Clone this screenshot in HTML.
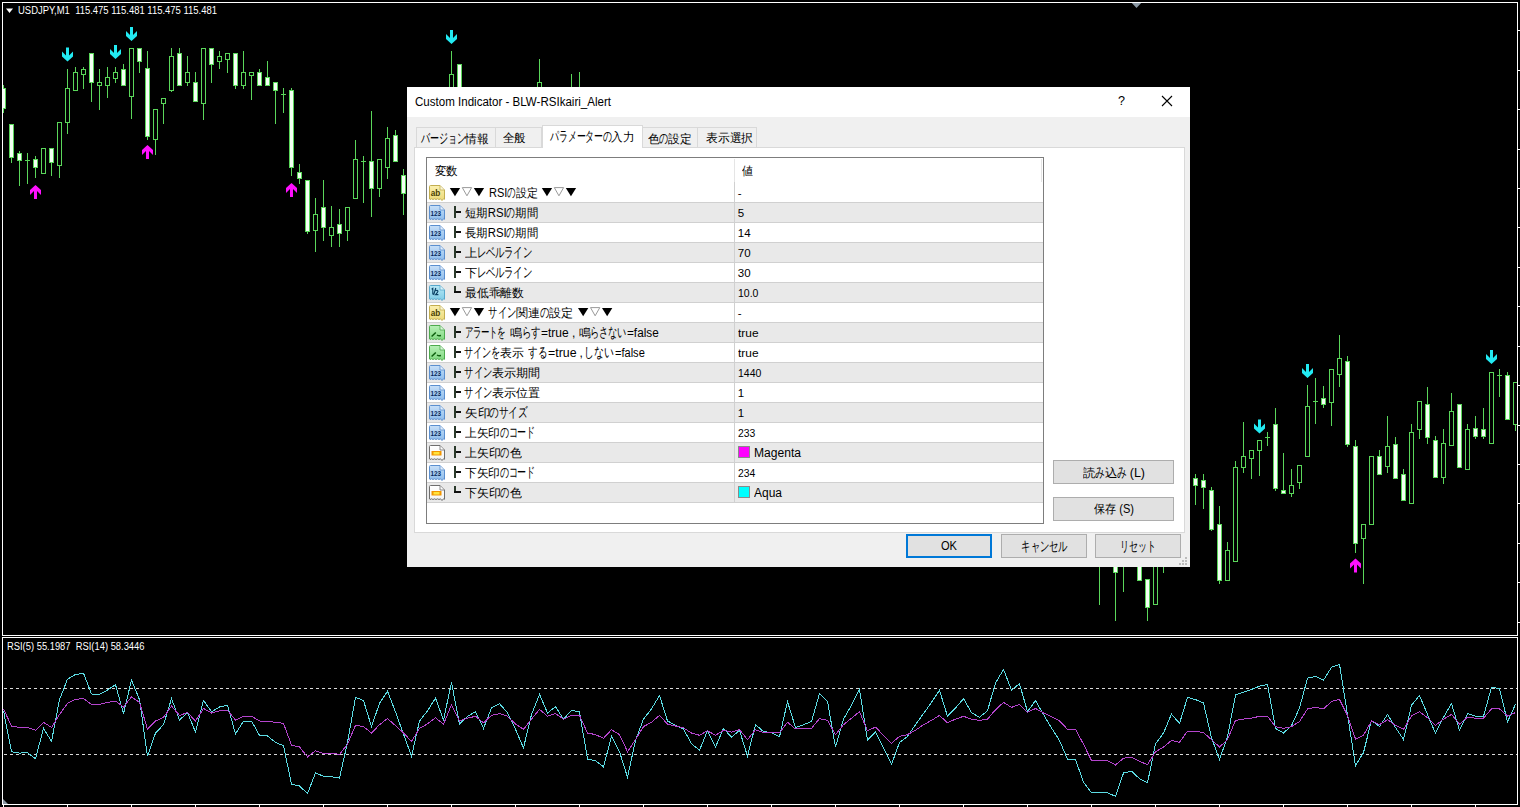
<!DOCTYPE html>
<html lang="ja"><head><meta charset="utf-8"><style>
html,body{margin:0;padding:0;background:#000;width:1520px;height:807px;overflow:hidden;position:relative}
body{font-family:"Liberation Sans",sans-serif}
.t{position:absolute;white-space:nowrap;line-height:1;display:inline-block;transform-origin:0 0}
.k{display:inline-block;width:0.74em}
.k>span{display:inline-block;font-size:1.18em;transform:scaleX(0.66);margin-left:-0.186em;width:1em;text-align:center}
</style></head><body>
<svg style="position:absolute;left:0;top:0" width="1520" height="807">
<defs><clipPath id="cc"><rect x="3" y="3" width="1514" height="632"/></clipPath><clipPath id="rc"><rect x="3" y="638" width="1514" height="166"/></clipPath></defs>
<g shape-rendering="crispEdges">
<rect x="2.5" y="2.5" width="1515" height="633" fill="none" stroke="#fff" stroke-width="1"/>
<rect x="2.5" y="637.5" width="1515" height="167" fill="none" stroke="#fff" stroke-width="1"/>
<line x1="1518" y1="30.5" x2="1520" y2="30.5" stroke="#fff"/>
<line x1="1518" y1="70.5" x2="1520" y2="70.5" stroke="#fff"/>
<line x1="1518" y1="109.5" x2="1520" y2="109.5" stroke="#fff"/>
<line x1="1518" y1="149.5" x2="1520" y2="149.5" stroke="#fff"/>
<line x1="1518" y1="188.5" x2="1520" y2="188.5" stroke="#fff"/>
<line x1="1518" y1="227.5" x2="1520" y2="227.5" stroke="#fff"/>
<line x1="1518" y1="267.5" x2="1520" y2="267.5" stroke="#fff"/>
<line x1="1518" y1="306.5" x2="1520" y2="306.5" stroke="#fff"/>
<line x1="1518" y1="346.5" x2="1520" y2="346.5" stroke="#fff"/>
<line x1="1518" y1="385.5" x2="1520" y2="385.5" stroke="#fff"/>
<line x1="1518" y1="425.5" x2="1520" y2="425.5" stroke="#fff"/>
<line x1="1518" y1="464.5" x2="1520" y2="464.5" stroke="#fff"/>
<line x1="1518" y1="503.5" x2="1520" y2="503.5" stroke="#fff"/>
<line x1="1518" y1="543.5" x2="1520" y2="543.5" stroke="#fff"/>
<line x1="1518" y1="582.5" x2="1520" y2="582.5" stroke="#fff"/>
<line x1="1518" y1="622.5" x2="1520" y2="622.5" stroke="#fff"/>
<line x1="4" y1="688.5" x2="1517" y2="688.5" stroke="#d8d8d8" stroke-dasharray="3,3"/>
<line x1="4" y1="754.5" x2="1517" y2="754.5" stroke="#d8d8d8" stroke-dasharray="3,3"/>
<line x1="3.5" y1="805" x2="3.5" y2="807" stroke="#fff"/>
<line x1="67.5" y1="805" x2="67.5" y2="807" stroke="#fff"/>
<line x1="131.5" y1="805" x2="131.5" y2="807" stroke="#fff"/>
<line x1="195.5" y1="805" x2="195.5" y2="807" stroke="#fff"/>
<line x1="259.5" y1="805" x2="259.5" y2="807" stroke="#fff"/>
<line x1="323.5" y1="805" x2="323.5" y2="807" stroke="#fff"/>
<line x1="387.5" y1="805" x2="387.5" y2="807" stroke="#fff"/>
<line x1="451.5" y1="805" x2="451.5" y2="807" stroke="#fff"/>
<line x1="515.5" y1="805" x2="515.5" y2="807" stroke="#fff"/>
<line x1="579.5" y1="805" x2="579.5" y2="807" stroke="#fff"/>
<line x1="643.5" y1="805" x2="643.5" y2="807" stroke="#fff"/>
<line x1="707.5" y1="805" x2="707.5" y2="807" stroke="#fff"/>
<line x1="771.5" y1="805" x2="771.5" y2="807" stroke="#fff"/>
<line x1="835.5" y1="805" x2="835.5" y2="807" stroke="#fff"/>
<line x1="899.5" y1="805" x2="899.5" y2="807" stroke="#fff"/>
<line x1="963.5" y1="805" x2="963.5" y2="807" stroke="#fff"/>
<line x1="1027.5" y1="805" x2="1027.5" y2="807" stroke="#fff"/>
<line x1="1091.5" y1="805" x2="1091.5" y2="807" stroke="#fff"/>
<line x1="1155.5" y1="805" x2="1155.5" y2="807" stroke="#fff"/>
<line x1="1219.5" y1="805" x2="1219.5" y2="807" stroke="#fff"/>
<line x1="1283.5" y1="805" x2="1283.5" y2="807" stroke="#fff"/>
<line x1="1347.5" y1="805" x2="1347.5" y2="807" stroke="#fff"/>
<line x1="1411.5" y1="805" x2="1411.5" y2="807" stroke="#fff"/>
<line x1="1475.5" y1="805" x2="1475.5" y2="807" stroke="#fff"/>
<g clip-path="url(#cc)">
<rect x="3" y="85" width="1" height="3" fill="#5ad65a"/>
<rect x="3" y="108" width="1" height="5" fill="#5ad65a"/>
<rect x="1" y="88" width="5" height="21" fill="#5ad65a"/>
<rect x="2" y="89" width="3" height="19" fill="#f4fff4"/>
<rect x="11" y="157" width="1" height="6" fill="#5ad65a"/>
<rect x="9" y="124" width="5" height="34" fill="#5ad65a"/>
<rect x="10" y="125" width="3" height="32" fill="#f4fff4"/>
<rect x="19" y="151" width="1" height="2" fill="#5ad65a"/>
<rect x="19" y="160" width="1" height="26" fill="#5ad65a"/>
<rect x="17" y="153" width="5" height="8" fill="#5ad65a"/>
<rect x="18" y="154" width="3" height="6" fill="#f4fff4"/>
<rect x="27" y="153" width="1" height="7" fill="#5ad65a"/>
<rect x="27" y="160" width="1" height="24" fill="#5ad65a"/>
<rect x="25" y="160" width="5" height="1" fill="#5ad65a"/>
<rect x="35" y="156" width="1" height="3" fill="#5ad65a"/>
<rect x="35" y="167" width="1" height="11" fill="#5ad65a"/>
<rect x="33" y="159" width="5" height="9" fill="#5ad65a"/>
<rect x="34" y="160" width="3" height="7" fill="#f4fff4"/>
<rect x="41.5" y="148.5" width="4" height="25" fill="none" stroke="#5ad65a"/>
<rect x="51" y="162" width="1" height="14" fill="#5ad65a"/>
<rect x="49" y="148" width="5" height="15" fill="#5ad65a"/>
<rect x="50" y="149" width="3" height="13" fill="#f4fff4"/>
<rect x="59" y="165" width="1" height="13" fill="#5ad65a"/>
<rect x="57.5" y="122.5" width="4" height="43" fill="none" stroke="#5ad65a"/>
<rect x="67" y="69" width="1" height="19" fill="#5ad65a"/>
<rect x="67" y="122" width="1" height="12" fill="#5ad65a"/>
<rect x="65.5" y="88.5" width="4" height="34" fill="none" stroke="#5ad65a"/>
<rect x="75" y="67" width="1" height="5" fill="#5ad65a"/>
<rect x="73.5" y="72.5" width="4" height="18" fill="none" stroke="#5ad65a"/>
<rect x="83" y="67" width="1" height="2" fill="#5ad65a"/>
<rect x="83" y="74" width="1" height="15" fill="#5ad65a"/>
<rect x="81.5" y="69.5" width="4" height="5" fill="none" stroke="#5ad65a"/>
<rect x="91" y="82" width="1" height="20" fill="#5ad65a"/>
<rect x="89" y="53" width="5" height="30" fill="#5ad65a"/>
<rect x="90" y="54" width="3" height="28" fill="#f4fff4"/>
<rect x="99" y="69" width="1" height="13" fill="#5ad65a"/>
<rect x="99" y="85" width="1" height="25" fill="#5ad65a"/>
<rect x="97.5" y="82.5" width="4" height="3" fill="none" stroke="#5ad65a"/>
<rect x="107" y="67" width="1" height="10" fill="#5ad65a"/>
<rect x="107" y="85" width="1" height="13" fill="#5ad65a"/>
<rect x="105.5" y="77.5" width="4" height="8" fill="none" stroke="#5ad65a"/>
<rect x="115" y="67" width="1" height="5" fill="#5ad65a"/>
<rect x="115" y="78" width="1" height="5" fill="#5ad65a"/>
<rect x="113.5" y="72.5" width="4" height="6" fill="none" stroke="#5ad65a"/>
<rect x="123" y="64" width="1" height="5" fill="#5ad65a"/>
<rect x="121" y="69" width="5" height="17" fill="#5ad65a"/>
<rect x="122" y="70" width="3" height="15" fill="#f4fff4"/>
<rect x="131" y="96" width="1" height="23" fill="#5ad65a"/>
<rect x="129.5" y="48.5" width="4" height="48" fill="none" stroke="#5ad65a"/>
<rect x="139" y="61" width="1" height="12" fill="#5ad65a"/>
<rect x="137" y="48" width="5" height="14" fill="#5ad65a"/>
<rect x="138" y="49" width="3" height="12" fill="#f4fff4"/>
<rect x="147" y="51" width="1" height="17" fill="#5ad65a"/>
<rect x="147" y="136" width="1" height="4" fill="#5ad65a"/>
<rect x="145" y="68" width="5" height="69" fill="#5ad65a"/>
<rect x="146" y="69" width="3" height="67" fill="#f4fff4"/>
<rect x="155" y="139" width="1" height="16" fill="#5ad65a"/>
<rect x="153.5" y="109.5" width="4" height="30" fill="none" stroke="#5ad65a"/>
<rect x="163" y="103" width="1" height="21" fill="#5ad65a"/>
<rect x="161.5" y="98.5" width="4" height="5" fill="none" stroke="#5ad65a"/>
<rect x="171" y="48" width="1" height="8" fill="#5ad65a"/>
<rect x="171" y="90" width="1" height="2" fill="#5ad65a"/>
<rect x="169.5" y="56.5" width="4" height="34" fill="none" stroke="#5ad65a"/>
<rect x="179" y="48" width="1" height="5" fill="#5ad65a"/>
<rect x="177" y="53" width="5" height="33" fill="#5ad65a"/>
<rect x="178" y="54" width="3" height="31" fill="#f4fff4"/>
<rect x="187" y="56" width="1" height="16" fill="#5ad65a"/>
<rect x="187" y="82" width="1" height="4" fill="#5ad65a"/>
<rect x="185.5" y="72.5" width="4" height="10" fill="none" stroke="#5ad65a"/>
<rect x="195" y="72" width="1" height="10" fill="#5ad65a"/>
<rect x="193" y="82" width="5" height="20" fill="#5ad65a"/>
<rect x="194" y="83" width="3" height="18" fill="#f4fff4"/>
<rect x="203" y="103" width="1" height="17" fill="#5ad65a"/>
<rect x="201.5" y="48.5" width="4" height="55" fill="none" stroke="#5ad65a"/>
<rect x="211" y="64" width="1" height="19" fill="#5ad65a"/>
<rect x="209" y="48" width="5" height="17" fill="#5ad65a"/>
<rect x="210" y="49" width="3" height="15" fill="#f4fff4"/>
<rect x="219" y="51" width="1" height="5" fill="#5ad65a"/>
<rect x="219" y="61" width="1" height="8" fill="#5ad65a"/>
<rect x="217.5" y="56.5" width="4" height="5" fill="none" stroke="#5ad65a"/>
<rect x="227" y="59" width="1" height="14" fill="#5ad65a"/>
<rect x="225.5" y="53.5" width="4" height="6" fill="none" stroke="#5ad65a"/>
<rect x="235" y="85" width="1" height="4" fill="#5ad65a"/>
<rect x="233" y="53" width="5" height="33" fill="#5ad65a"/>
<rect x="234" y="54" width="3" height="31" fill="#f4fff4"/>
<rect x="243" y="51" width="1" height="21" fill="#5ad65a"/>
<rect x="243" y="85" width="1" height="4" fill="#5ad65a"/>
<rect x="241.5" y="72.5" width="4" height="13" fill="none" stroke="#5ad65a"/>
<rect x="251" y="75" width="1" height="25" fill="#5ad65a"/>
<rect x="249.5" y="72.5" width="4" height="3" fill="none" stroke="#5ad65a"/>
<rect x="259" y="69" width="1" height="3" fill="#5ad65a"/>
<rect x="257" y="72" width="5" height="14" fill="#5ad65a"/>
<rect x="258" y="73" width="3" height="12" fill="#f4fff4"/>
<rect x="267" y="61" width="1" height="16" fill="#5ad65a"/>
<rect x="265" y="77" width="5" height="9" fill="#5ad65a"/>
<rect x="266" y="78" width="3" height="7" fill="#f4fff4"/>
<rect x="275" y="90" width="1" height="34" fill="#5ad65a"/>
<rect x="273" y="82" width="5" height="9" fill="#5ad65a"/>
<rect x="274" y="83" width="3" height="7" fill="#f4fff4"/>
<rect x="283" y="88" width="1" height="6" fill="#5ad65a"/>
<rect x="283" y="94" width="1" height="19" fill="#5ad65a"/>
<rect x="281" y="94" width="5" height="1" fill="#5ad65a"/>
<rect x="291" y="88" width="1" height="2" fill="#5ad65a"/>
<rect x="291" y="167" width="1" height="9" fill="#5ad65a"/>
<rect x="289" y="90" width="5" height="78" fill="#5ad65a"/>
<rect x="290" y="91" width="3" height="76" fill="#f4fff4"/>
<rect x="299" y="164" width="1" height="8" fill="#5ad65a"/>
<rect x="299" y="178" width="1" height="6" fill="#5ad65a"/>
<rect x="297" y="172" width="5" height="7" fill="#5ad65a"/>
<rect x="298" y="173" width="3" height="5" fill="#f4fff4"/>
<rect x="307" y="231" width="1" height="3" fill="#5ad65a"/>
<rect x="305" y="180" width="5" height="52" fill="#5ad65a"/>
<rect x="306" y="181" width="3" height="50" fill="#f4fff4"/>
<rect x="315" y="198" width="1" height="16" fill="#5ad65a"/>
<rect x="315" y="230" width="1" height="22" fill="#5ad65a"/>
<rect x="313.5" y="214.5" width="4" height="16" fill="none" stroke="#5ad65a"/>
<rect x="323" y="180" width="1" height="27" fill="#5ad65a"/>
<rect x="323" y="227" width="1" height="14" fill="#5ad65a"/>
<rect x="321" y="207" width="5" height="21" fill="#5ad65a"/>
<rect x="322" y="208" width="3" height="19" fill="#f4fff4"/>
<rect x="331" y="206" width="1" height="21" fill="#5ad65a"/>
<rect x="331" y="235" width="1" height="12" fill="#5ad65a"/>
<rect x="329.5" y="227.5" width="4" height="8" fill="none" stroke="#5ad65a"/>
<rect x="339" y="209" width="1" height="15" fill="#5ad65a"/>
<rect x="339" y="233" width="1" height="14" fill="#5ad65a"/>
<rect x="337" y="224" width="5" height="10" fill="#5ad65a"/>
<rect x="338" y="225" width="3" height="8" fill="#f4fff4"/>
<rect x="347" y="230" width="1" height="11" fill="#5ad65a"/>
<rect x="345.5" y="207.5" width="4" height="23" fill="none" stroke="#5ad65a"/>
<rect x="355" y="140" width="1" height="19" fill="#5ad65a"/>
<rect x="353.5" y="159.5" width="4" height="39" fill="none" stroke="#5ad65a"/>
<rect x="363" y="156" width="1" height="5" fill="#5ad65a"/>
<rect x="363" y="161" width="1" height="42" fill="#5ad65a"/>
<rect x="361" y="161" width="5" height="1" fill="#5ad65a"/>
<rect x="371" y="111" width="1" height="50" fill="#5ad65a"/>
<rect x="371" y="188" width="1" height="29" fill="#5ad65a"/>
<rect x="369" y="161" width="5" height="28" fill="#5ad65a"/>
<rect x="370" y="162" width="3" height="26" fill="#f4fff4"/>
<rect x="379" y="188" width="1" height="9" fill="#5ad65a"/>
<rect x="377.5" y="159.5" width="4" height="29" fill="none" stroke="#5ad65a"/>
<rect x="387" y="127" width="1" height="11" fill="#5ad65a"/>
<rect x="387" y="167" width="1" height="12" fill="#5ad65a"/>
<rect x="385.5" y="138.5" width="4" height="29" fill="none" stroke="#5ad65a"/>
<rect x="395" y="130" width="1" height="5" fill="#5ad65a"/>
<rect x="393" y="135" width="5" height="27" fill="#5ad65a"/>
<rect x="394" y="136" width="3" height="25" fill="#f4fff4"/>
<rect x="403" y="169" width="1" height="6" fill="#5ad65a"/>
<rect x="403" y="193" width="1" height="22" fill="#5ad65a"/>
<rect x="401" y="175" width="5" height="19" fill="#5ad65a"/>
<rect x="402" y="176" width="3" height="17" fill="#f4fff4"/>
<rect x="451" y="51" width="1" height="23" fill="#5ad65a"/>
<rect x="449.5" y="74.5" width="4" height="46" fill="none" stroke="#5ad65a"/>
<rect x="457" y="64" width="5" height="57" fill="#5ad65a"/>
<rect x="458" y="65" width="3" height="55" fill="#f4fff4"/>
<rect x="539" y="59" width="1" height="23" fill="#5ad65a"/>
<rect x="537.5" y="82.5" width="4" height="38" fill="none" stroke="#5ad65a"/>
<rect x="571" y="74" width="1" height="26" fill="#5ad65a"/>
<rect x="569.5" y="100.5" width="4" height="20" fill="none" stroke="#5ad65a"/>
<rect x="579" y="72" width="1" height="28" fill="#5ad65a"/>
<rect x="577.5" y="100.5" width="4" height="20" fill="none" stroke="#5ad65a"/>
<rect x="1099" y="540" width="1" height="0" fill="#5ad65a"/>
<rect x="1099" y="560" width="1" height="45" fill="#5ad65a"/>
<rect x="1097.5" y="540.5" width="4" height="20" fill="none" stroke="#5ad65a"/>
<rect x="1115" y="572" width="1" height="49" fill="#5ad65a"/>
<rect x="1113" y="540" width="5" height="33" fill="#5ad65a"/>
<rect x="1114" y="541" width="3" height="31" fill="#f4fff4"/>
<rect x="1123" y="540" width="1" height="0" fill="#5ad65a"/>
<rect x="1123" y="560" width="1" height="32" fill="#5ad65a"/>
<rect x="1121.5" y="540.5" width="4" height="20" fill="none" stroke="#5ad65a"/>
<rect x="1137" y="540" width="5" height="41" fill="#5ad65a"/>
<rect x="1138" y="541" width="3" height="39" fill="#f4fff4"/>
<rect x="1147" y="607" width="1" height="14" fill="#5ad65a"/>
<rect x="1145" y="579" width="5" height="29" fill="#5ad65a"/>
<rect x="1146" y="580" width="3" height="27" fill="#f4fff4"/>
<rect x="1153.5" y="540.5" width="4" height="64" fill="none" stroke="#5ad65a"/>
<rect x="1163" y="540" width="1" height="0" fill="#5ad65a"/>
<rect x="1163" y="560" width="1" height="13" fill="#5ad65a"/>
<rect x="1161.5" y="540.5" width="4" height="20" fill="none" stroke="#5ad65a"/>
<rect x="1195" y="474" width="1" height="4" fill="#5ad65a"/>
<rect x="1195" y="485" width="1" height="20" fill="#5ad65a"/>
<rect x="1193" y="478" width="5" height="8" fill="#5ad65a"/>
<rect x="1194" y="479" width="3" height="6" fill="#f4fff4"/>
<rect x="1203" y="474" width="1" height="6" fill="#5ad65a"/>
<rect x="1203" y="487" width="1" height="22" fill="#5ad65a"/>
<rect x="1201" y="480" width="5" height="8" fill="#5ad65a"/>
<rect x="1202" y="481" width="3" height="6" fill="#f4fff4"/>
<rect x="1211" y="487" width="1" height="3" fill="#5ad65a"/>
<rect x="1211" y="529" width="1" height="2" fill="#5ad65a"/>
<rect x="1209" y="490" width="5" height="40" fill="#5ad65a"/>
<rect x="1210" y="491" width="3" height="38" fill="#f4fff4"/>
<rect x="1219" y="506" width="1" height="18" fill="#5ad65a"/>
<rect x="1219" y="580" width="1" height="4" fill="#5ad65a"/>
<rect x="1217" y="524" width="5" height="57" fill="#5ad65a"/>
<rect x="1218" y="525" width="3" height="55" fill="#f4fff4"/>
<rect x="1227" y="542" width="1" height="8" fill="#5ad65a"/>
<rect x="1225.5" y="550.5" width="4" height="30" fill="none" stroke="#5ad65a"/>
<rect x="1235" y="461" width="1" height="6" fill="#5ad65a"/>
<rect x="1233.5" y="467.5" width="4" height="94" fill="none" stroke="#5ad65a"/>
<rect x="1243" y="422" width="1" height="34" fill="#5ad65a"/>
<rect x="1243" y="467" width="1" height="6" fill="#5ad65a"/>
<rect x="1241.5" y="456.5" width="4" height="11" fill="none" stroke="#5ad65a"/>
<rect x="1251" y="458" width="1" height="21" fill="#5ad65a"/>
<rect x="1249.5" y="450.5" width="4" height="8" fill="none" stroke="#5ad65a"/>
<rect x="1259" y="450" width="1" height="26" fill="#5ad65a"/>
<rect x="1257.5" y="440.5" width="4" height="10" fill="none" stroke="#5ad65a"/>
<rect x="1267" y="432" width="1" height="5" fill="#5ad65a"/>
<rect x="1267" y="437" width="1" height="9" fill="#5ad65a"/>
<rect x="1265" y="437" width="5" height="1" fill="#5ad65a"/>
<rect x="1275" y="408" width="1" height="16" fill="#5ad65a"/>
<rect x="1275" y="488" width="1" height="3" fill="#5ad65a"/>
<rect x="1273" y="424" width="5" height="65" fill="#5ad65a"/>
<rect x="1274" y="425" width="3" height="63" fill="#f4fff4"/>
<rect x="1283" y="453" width="1" height="37" fill="#5ad65a"/>
<rect x="1281" y="490" width="5" height="4" fill="#5ad65a"/>
<rect x="1282" y="491" width="3" height="2" fill="#f4fff4"/>
<rect x="1291" y="469" width="1" height="16" fill="#5ad65a"/>
<rect x="1291" y="493" width="1" height="4" fill="#5ad65a"/>
<rect x="1289.5" y="485.5" width="4" height="8" fill="none" stroke="#5ad65a"/>
<rect x="1299" y="482" width="1" height="7" fill="#5ad65a"/>
<rect x="1297.5" y="465.5" width="4" height="17" fill="none" stroke="#5ad65a"/>
<rect x="1307" y="385" width="1" height="21" fill="#5ad65a"/>
<rect x="1305.5" y="406.5" width="4" height="50" fill="none" stroke="#5ad65a"/>
<rect x="1315" y="378" width="1" height="23" fill="#5ad65a"/>
<rect x="1315" y="401" width="1" height="23" fill="#5ad65a"/>
<rect x="1313" y="401" width="5" height="1" fill="#5ad65a"/>
<rect x="1323" y="386" width="1" height="12" fill="#5ad65a"/>
<rect x="1323" y="404" width="1" height="4" fill="#5ad65a"/>
<rect x="1321" y="398" width="5" height="7" fill="#5ad65a"/>
<rect x="1322" y="399" width="3" height="5" fill="#f4fff4"/>
<rect x="1331" y="402" width="1" height="24" fill="#5ad65a"/>
<rect x="1329.5" y="369.5" width="4" height="33" fill="none" stroke="#5ad65a"/>
<rect x="1339" y="335" width="1" height="23" fill="#5ad65a"/>
<rect x="1339" y="374" width="1" height="13" fill="#5ad65a"/>
<rect x="1337.5" y="358.5" width="4" height="16" fill="none" stroke="#5ad65a"/>
<rect x="1347" y="356" width="1" height="5" fill="#5ad65a"/>
<rect x="1347" y="444" width="1" height="3" fill="#5ad65a"/>
<rect x="1345" y="361" width="5" height="84" fill="#5ad65a"/>
<rect x="1346" y="362" width="3" height="82" fill="#f4fff4"/>
<rect x="1355" y="440" width="1" height="6" fill="#5ad65a"/>
<rect x="1355" y="543" width="1" height="10" fill="#5ad65a"/>
<rect x="1353" y="446" width="5" height="98" fill="#5ad65a"/>
<rect x="1354" y="447" width="3" height="96" fill="#f4fff4"/>
<rect x="1363" y="538" width="1" height="46" fill="#5ad65a"/>
<rect x="1361.5" y="524.5" width="4" height="14" fill="none" stroke="#5ad65a"/>
<rect x="1369.5" y="456.5" width="4" height="68" fill="none" stroke="#5ad65a"/>
<rect x="1379" y="450" width="1" height="6" fill="#5ad65a"/>
<rect x="1377" y="456" width="5" height="19" fill="#5ad65a"/>
<rect x="1378" y="457" width="3" height="17" fill="#f4fff4"/>
<rect x="1387" y="416" width="1" height="30" fill="#5ad65a"/>
<rect x="1387" y="466" width="1" height="7" fill="#5ad65a"/>
<rect x="1385.5" y="446.5" width="4" height="20" fill="none" stroke="#5ad65a"/>
<rect x="1395" y="437" width="1" height="7" fill="#5ad65a"/>
<rect x="1393" y="444" width="5" height="35" fill="#5ad65a"/>
<rect x="1394" y="445" width="3" height="33" fill="#f4fff4"/>
<rect x="1403" y="469" width="1" height="5" fill="#5ad65a"/>
<rect x="1401" y="474" width="5" height="27" fill="#5ad65a"/>
<rect x="1402" y="475" width="3" height="25" fill="#f4fff4"/>
<rect x="1411" y="424" width="1" height="8" fill="#5ad65a"/>
<rect x="1409.5" y="432.5" width="4" height="71" fill="none" stroke="#5ad65a"/>
<rect x="1419" y="429" width="1" height="10" fill="#5ad65a"/>
<rect x="1417.5" y="401.5" width="4" height="28" fill="none" stroke="#5ad65a"/>
<rect x="1427" y="387" width="1" height="17" fill="#5ad65a"/>
<rect x="1427" y="437" width="1" height="7" fill="#5ad65a"/>
<rect x="1425" y="404" width="5" height="34" fill="#5ad65a"/>
<rect x="1426" y="405" width="3" height="32" fill="#f4fff4"/>
<rect x="1435" y="436" width="1" height="4" fill="#5ad65a"/>
<rect x="1433" y="440" width="5" height="38" fill="#5ad65a"/>
<rect x="1434" y="441" width="3" height="36" fill="#f4fff4"/>
<rect x="1443" y="429" width="1" height="14" fill="#5ad65a"/>
<rect x="1443" y="477" width="1" height="7" fill="#5ad65a"/>
<rect x="1441.5" y="443.5" width="4" height="34" fill="none" stroke="#5ad65a"/>
<rect x="1451" y="393" width="1" height="18" fill="#5ad65a"/>
<rect x="1449.5" y="411.5" width="4" height="34" fill="none" stroke="#5ad65a"/>
<rect x="1457" y="404" width="5" height="64" fill="#5ad65a"/>
<rect x="1458" y="405" width="3" height="62" fill="#f4fff4"/>
<rect x="1467" y="424" width="1" height="5" fill="#5ad65a"/>
<rect x="1465.5" y="429.5" width="4" height="40" fill="none" stroke="#5ad65a"/>
<rect x="1475" y="416" width="1" height="12" fill="#5ad65a"/>
<rect x="1475" y="436" width="1" height="3" fill="#5ad65a"/>
<rect x="1473" y="428" width="5" height="9" fill="#5ad65a"/>
<rect x="1474" y="429" width="3" height="7" fill="#f4fff4"/>
<rect x="1483" y="408" width="1" height="21" fill="#5ad65a"/>
<rect x="1483" y="436" width="1" height="3" fill="#5ad65a"/>
<rect x="1481" y="429" width="5" height="8" fill="#5ad65a"/>
<rect x="1482" y="430" width="3" height="6" fill="#f4fff4"/>
<rect x="1489.5" y="372.5" width="4" height="71" fill="none" stroke="#5ad65a"/>
<rect x="1499" y="369" width="1" height="6" fill="#5ad65a"/>
<rect x="1499" y="375" width="1" height="22" fill="#5ad65a"/>
<rect x="1497" y="375" width="5" height="1" fill="#5ad65a"/>
<rect x="1507" y="372" width="1" height="3" fill="#5ad65a"/>
<rect x="1505" y="375" width="5" height="45" fill="#5ad65a"/>
<rect x="1506" y="376" width="3" height="43" fill="#f4fff4"/>
<rect x="1515" y="424" width="1" height="7" fill="#5ad65a"/>
<rect x="1513.5" y="382.5" width="4" height="42" fill="none" stroke="#5ad65a"/>
</g></g>
<path d="M66.0 47.5 H69.0 V55.5 L73.0 51.5 V56.5 L67.5 61.5 L62.0 56.5 V51.5 L66.0 55.5 Z" fill="#22eaf2"/>
<path d="M114.0 45 H117.0 V53 L121.0 49 V54 L115.5 59 L110.0 54 V49 L114.0 53 Z" fill="#22eaf2"/>
<path d="M130.0 27 H133.0 V35 L137.0 31 V36 L131.5 41 L126.0 36 V31 L130.0 35 Z" fill="#22eaf2"/>
<path d="M34.0 199 H37.0 V191 L41.0 195 V190 L35.5 185 L30.0 190 V195 L34.0 191 Z" fill="#ff10ff"/>
<path d="M146.0 159 H149.0 V151 L153.0 155 V150 L147.5 145 L142.0 150 V155 L146.0 151 Z" fill="#ff10ff"/>
<path d="M290.0 197 H293.0 V189 L297.0 193 V188 L291.5 183 L286.0 188 V193 L290.0 189 Z" fill="#ff10ff"/>
<path d="M450.0 30 H453.0 V38 L457.0 34 V39 L451.5 44 L446.0 39 V34 L450.0 38 Z" fill="#22eaf2"/>
<path d="M1258.0 419.5 H1261.0 V427.5 L1265.0 423.5 V428.5 L1259.5 433.5 L1254.0 428.5 V423.5 L1258.0 427.5 Z" fill="#22eaf2"/>
<path d="M1306.0 364 H1309.0 V372 L1313.0 368 V373 L1307.5 378 L1302.0 373 V368 L1306.0 372 Z" fill="#22eaf2"/>
<path d="M1354.0 572.4 H1357.0 V564.4 L1361.0 568.4 V563.4 L1355.5 558.4 L1350.0 563.4 V568.4 L1354.0 564.4 Z" fill="#ff10ff"/>
<path d="M1490.0 350 H1493.0 V358 L1497.0 354 V359 L1491.5 364 L1486.0 359 V354 L1490.0 358 Z" fill="#22eaf2"/>
<g clip-path="url(#rc)">
<polyline points="3.5,710.8 11.5,751.7 19.5,753.1 27.5,752.6 35.5,758.7 43.5,728.4 51.5,741.4 59.5,699.6 67.5,679.2 75.5,674.5 83.5,673.2 91.5,694.0 99.5,694.4 107.5,690.0 115.5,684.7 123.5,713.6 131.5,680.1 139.5,699.6 147.5,756.3 155.5,733.0 163.5,724.7 171.5,698.7 179.5,720.0 187.5,712.6 195.5,732.1 203.5,700.5 211.5,711.7 219.5,707.0 227.5,705.2 235.5,734.0 243.5,721.0 251.5,721.0 259.5,735.3 267.5,735.9 275.5,742.4 283.5,745.7 291.5,784.2 299.5,786.0 307.5,793.5 315.5,773.0 323.5,776.2 331.5,776.7 339.5,778.0 347.5,742.4 355.5,697.4 363.5,700.5 371.5,726.6 379.5,703.3 387.5,691.2 395.5,712.0 403.5,734.0 411.5,756.3 419.5,721.0 427.5,710.8 435.5,698.1 443.5,720.0 451.5,682.5 459.5,724.1 467.5,716.3 475.5,711.7 483.5,728.4 491.5,708.0 499.5,703.7 507.5,712.6 515.5,729.3 523.5,747.9 531.5,714.5 539.5,694.4 547.5,713.0 555.5,706.7 563.5,719.1 571.5,710.4 579.5,711.7 587.5,759.1 595.5,760.6 603.5,766.9 611.5,736.4 619.5,751.7 627.5,777.3 635.5,740.5 643.5,719.1 651.5,708.9 659.5,695.5 667.5,721.0 675.5,725.3 683.5,729.0 691.5,743.8 699.5,750.2 707.5,730.8 715.5,747.0 723.5,728.4 731.5,737.2 739.5,730.3 747.5,756.3 755.5,724.7 763.5,731.6 771.5,732.7 779.5,736.8 787.5,701.5 795.5,727.5 803.5,724.7 811.5,721.5 819.5,693.7 827.5,701.5 835.5,747.0 843.5,719.1 851.5,705.2 859.5,689.4 867.5,740.1 875.5,732.1 883.5,747.9 891.5,764.3 899.5,742.4 907.5,736.4 915.5,724.7 923.5,713.6 931.5,702.4 939.5,690.3 947.5,716.3 955.5,708.0 963.5,698.7 971.5,712.6 979.5,717.3 987.5,710.8 995.5,682.9 1003.5,669.5 1011.5,690.0 1019.5,683.8 1027.5,711.7 1035.5,700.5 1043.5,714.5 1051.5,727.9 1059.5,740.5 1067.5,759.1 1075.5,759.5 1083.5,782.3 1091.5,792.9 1099.5,792.9 1107.5,792.9 1115.5,796.3 1123.5,773.0 1131.5,771.2 1139.5,778.6 1147.5,782.9 1155.5,743.8 1163.5,733.0 1171.5,714.1 1179.5,723.4 1187.5,697.4 1195.5,699.6 1203.5,703.0 1211.5,737.7 1219.5,759.5 1227.5,736.8 1235.5,695.0 1243.5,692.2 1251.5,689.4 1259.5,686.2 1267.5,684.4 1275.5,728.4 1283.5,733.0 1291.5,725.6 1299.5,708.0 1307.5,678.2 1315.5,676.4 1323.5,680.1 1331.5,667.3 1339.5,664.3 1347.5,714.7 1355.5,765.6 1363.5,752.6 1371.5,720.4 1379.5,726.6 1387.5,714.5 1395.5,727.5 1403.5,739.6 1411.5,705.2 1419.5,695.5 1427.5,714.5 1435.5,733.4 1443.5,717.3 1451.5,703.7 1459.5,730.3 1467.5,713.6 1475.5,716.3 1483.5,716.3 1491.5,687.5 1499.5,688.5 1507.5,721.9 1515.5,704.3" fill="none" stroke="#5cdce4" stroke-width="1" shape-rendering="crispEdges"/>
<polyline points="3.5,708.9 11.5,726.0 19.5,727.5 27.5,727.5 35.5,730.3 43.5,722.3 51.5,727.5 59.5,714.5 67.5,703.3 75.5,699.2 83.5,698.7 91.5,704.3 99.5,704.3 107.5,702.4 115.5,701.1 123.5,707.0 131.5,696.8 139.5,702.4 147.5,729.3 155.5,721.0 163.5,717.3 171.5,706.1 179.5,715.4 187.5,712.6 195.5,721.0 203.5,708.5 211.5,713.0 219.5,710.8 227.5,710.4 235.5,720.0 243.5,716.3 251.5,716.3 259.5,721.0 267.5,721.5 275.5,722.3 283.5,723.4 291.5,745.1 299.5,747.0 307.5,756.9 315.5,750.7 323.5,753.5 331.5,753.1 339.5,754.4 347.5,744.2 355.5,725.3 363.5,726.6 371.5,733.0 379.5,724.7 387.5,718.6 395.5,725.6 403.5,733.0 411.5,741.4 419.5,728.4 427.5,723.8 435.5,717.8 443.5,724.1 451.5,704.8 459.5,721.0 467.5,718.2 475.5,716.3 483.5,722.8 491.5,715.4 499.5,713.6 507.5,716.3 515.5,724.1 523.5,729.3 531.5,719.1 539.5,709.3 547.5,716.3 555.5,713.6 563.5,719.1 571.5,715.4 579.5,715.4 587.5,733.0 595.5,734.6 603.5,738.3 611.5,729.7 619.5,734.6 627.5,751.7 635.5,739.6 643.5,726.6 651.5,722.3 659.5,715.4 667.5,724.1 675.5,726.0 683.5,727.9 691.5,733.0 699.5,735.3 707.5,730.8 715.5,735.3 723.5,730.3 731.5,732.1 739.5,729.7 747.5,739.6 755.5,729.7 763.5,732.7 771.5,732.7 779.5,733.0 787.5,722.3 795.5,729.0 803.5,728.4 811.5,728.4 819.5,718.6 827.5,720.4 835.5,734.6 843.5,724.7 851.5,718.2 859.5,711.7 867.5,730.8 875.5,727.1 883.5,735.3 891.5,743.3 899.5,736.4 907.5,734.6 915.5,730.3 923.5,724.7 931.5,720.4 939.5,715.4 947.5,722.8 955.5,719.1 963.5,716.3 971.5,719.1 979.5,720.4 987.5,719.1 995.5,709.8 1003.5,702.4 1011.5,707.4 1019.5,704.3 1027.5,712.2 1035.5,708.5 1043.5,713.0 1051.5,716.7 1059.5,721.0 1067.5,729.3 1075.5,729.3 1083.5,744.2 1091.5,760.6 1099.5,760.6 1107.5,760.6 1115.5,765.0 1123.5,758.2 1131.5,757.2 1139.5,761.3 1147.5,764.7 1155.5,751.7 1163.5,747.0 1171.5,740.5 1179.5,742.4 1187.5,731.2 1195.5,731.2 1203.5,732.7 1211.5,739.6 1219.5,747.0 1227.5,739.6 1235.5,720.4 1243.5,719.1 1251.5,718.2 1259.5,716.3 1267.5,716.3 1275.5,726.6 1283.5,728.4 1291.5,726.6 1299.5,721.5 1307.5,708.9 1315.5,707.4 1323.5,708.9 1331.5,701.5 1339.5,699.4 1347.5,715.4 1355.5,739.0 1363.5,735.3 1371.5,721.0 1379.5,724.7 1387.5,719.7 1395.5,725.3 1403.5,729.3 1411.5,716.0 1419.5,711.7 1427.5,717.8 1435.5,725.3 1443.5,719.1 1451.5,714.5 1459.5,724.1 1467.5,717.3 1475.5,718.2 1483.5,718.2 1491.5,708.9 1499.5,708.9 1507.5,716.0 1515.5,712.6" fill="none" stroke="#b444cc" stroke-width="1" shape-rendering="crispEdges"/>
</g>
<path d="M1131.8 3 L1141.2 3 L1136.5 8 Z" fill="#8a97a3"/>
<path d="M3 799 L3 804 L8 804 Z" fill="#8a97a3"/>
<path d="M6 8.5 L13 8.5 L9.5 13 Z" fill="#fff"/>
</svg>
<span class="t " id="t0" style="left:17.6px;top:11.2px;font-size:10px;color:#fff;margin-top:-5.00px;transform:scaleX(0.9460);">USDJPY,M1&nbsp;&nbsp;115.475 115.481 115.475 115.481</span>
<span class="t " id="t1" style="left:7px;top:647.2px;font-size:10px;color:#fff;margin-top:-5.00px;transform:scaleX(0.9369);">RSI(5) 55.1987&nbsp;&nbsp;RSI(14) 58.3446</span>
<div style="position:absolute;left:407px;top:87px;width:783px;height:480px;background:#f0f0f0;"></div>
<div style="position:absolute;left:407px;top:87px;width:783px;height:30px;background:#fff;"></div>
<span class="t " id="t2" style="left:415px;top:101.5px;font-size:12px;color:#000;margin-top:-6.00px;transform:scaleX(0.9626);">Custom Indicator - BLW-RSIkairi_Alert</span>
<span class="t " id="t3" style="left:1118px;top:100.3px;font-size:13px;color:#000;margin-top:-6.50px;transform:scaleX(0.9676);">?</span>
<svg style="position:absolute;left:1161px;top:95.3px" width="12" height="12"><path d="M1 1L11 11M11 1L1 11" stroke="#000" stroke-width="1.1"/></svg>
<div style="position:absolute;left:416px;top:127px;width:80px;height:20px;background:#f0f0f0;border-top:1px solid #d9d9d9;border-right:1px solid #d9d9d9;box-sizing:border-box;border-left:1px solid #d9d9d9;"></div>
<span class="t " id="t4" style="left:422px;top:138px;font-size:12px;color:#000;margin-top:-7.08px;transform:scaleX(0.9799);"><span class="k"><span>バ</span></span><span class="k"><span>ー</span></span><span class="k"><span>ジ</span></span><span class="k"><span>ョ</span></span><span class="k"><span>ン</span></span>情報</span>
<div style="position:absolute;left:496px;top:127px;width:46px;height:20px;background:#f0f0f0;border-top:1px solid #d9d9d9;border-right:1px solid #d9d9d9;box-sizing:border-box;"></div>
<span class="t " id="t5" style="left:502.5px;top:138px;font-size:12px;color:#000;margin-top:-6.00px;transform:scaleX(0.9583);">全般</span>
<div style="position:absolute;left:643px;top:127px;width:55px;height:20px;background:#f0f0f0;border-top:1px solid #d9d9d9;border-right:1px solid #d9d9d9;box-sizing:border-box;"></div>
<span class="t " id="t6" style="left:648px;top:138px;font-size:12px;color:#000;margin-top:-7.08px;transform:scaleX(0.9805);">色<span class="k"><span>の</span></span>設定</span>
<div style="position:absolute;left:698px;top:127px;width:59px;height:20px;background:#f0f0f0;border-top:1px solid #d9d9d9;border-right:1px solid #d9d9d9;box-sizing:border-box;"></div>
<span class="t " id="t7" style="left:705.5px;top:138px;font-size:12px;color:#000;margin-top:-6.00px;transform:scaleX(0.9792);">表示選択</span>
<div style="position:absolute;left:414px;top:147px;width:771px;height:386px;background:#fff;border:1px solid #d9d9d9;box-sizing:border-box;"></div>
<div style="position:absolute;left:542px;top:125px;width:101px;height:23px;background:#fff;border:1px solid #d9d9d9;border-bottom:none;box-sizing:border-box;"></div>
<span class="t " id="t8" style="left:550.5px;top:136.5px;font-size:12px;color:#000;margin-top:-7.08px;transform:scaleX(0.9695);"><span class="k"><span>パ</span></span><span class="k"><span>ラ</span></span><span class="k"><span>メ</span></span><span class="k"><span>ー</span></span><span class="k"><span>タ</span></span><span class="k"><span>ー</span></span><span class="k"><span>の</span></span>入力</span>
<div style="position:absolute;left:426px;top:157px;width:618px;height:367px;background:#fff;border:1px solid #7d7d7d;box-sizing:border-box;"></div>
<div style="position:absolute;left:734px;top:159px;width:1px;height:23px;background:#e5e5e5;"></div>
<div style="position:absolute;left:1041px;top:159px;width:1px;height:23px;background:#e5e5e5;"></div>
<span class="t " id="t9" style="left:434.5px;top:171px;font-size:12px;color:#000;margin-top:-6.00px;transform:scaleX(0.9583);">変数</span>
<span class="t " id="t10" style="left:741.5px;top:171px;font-size:12px;color:#000;margin-top:-6.00px;transform:scaleX(0.9167);">値</span>
<svg style="position:absolute;left:429px;top:184.5px" width="16" height="16" viewBox="0 0 16 16"><defs><linearGradient id="gab" x1="0" y1="0" x2="0" y2="1"><stop offset="0" stop-color="#fbf0b0"/><stop offset="1" stop-color="#ecd978"/></linearGradient></defs><path d="M0.5 1.5 Q0.5 0.5 1.5 0.5 H11 L15.5 5 V14.3 L14.5 13.8 L13 15.5 L11.5 13.8 L10 14.5 L8.5 13.8 L7 14.5 L5.5 13.8 L4 14.5 L2.5 13.8 L1 14.5 L0.5 14 Z" fill="url(#gab)" stroke="#c2ae50" stroke-width="1"/><path d="M11 0.5 V5 H15.5" fill="#fff" fill-opacity="0.6" stroke="#c2ae50" stroke-width="0.8"/><text x="1.8" y="11" font-size="9.5" font-family="Liberation Sans" font-weight="bold" fill="#4a3e00" textLength="9.6" lengthAdjust="spacingAndGlyphs">ab</text></svg>
<svg style="position:absolute;left:0;top:0;overflow:visible" width="1" height="1"><path d="M449.8 187.9 H460.1 L454.95 196.3 Z" fill="#000"/><path d="M462.3 187.6 H471.6 L466.95 195.8 Z" fill="none" stroke="#9a9a9a" stroke-width="1"/><path d="M473.8 187.9 H484.1 L478.95 196.3 Z" fill="#000"/></svg>
<span class="t " id="t11" style="left:488.6px;top:192.5px;font-size:12px;color:#000;margin-top:-7.08px;transform:scaleX(0.9189);">RSI<span class="k"><span>の</span></span>設定</span>
<svg style="position:absolute;left:0;top:0;overflow:visible" width="1" height="1"><path d="M541.8 187.9 H552.0999999999999 L546.9499999999999 196.3 Z" fill="#000"/><path d="M554.3 187.6 H563.5999999999999 L558.9499999999999 195.8 Z" fill="none" stroke="#9a9a9a" stroke-width="1"/><path d="M565.8 187.9 H576.0999999999999 L570.9499999999999 196.3 Z" fill="#000"/></svg>
<span class="t " id="t12" style="left:737.8px;top:193.8px;font-size:11.5px;color:#000;margin-top:-5.75px;transform:scaleX(1.0000);">-</span>
<div style="position:absolute;left:427px;top:202px;width:616px;height:20px;background:#e9e9e9;"></div>
<div style="position:absolute;left:427px;top:202px;width:616px;height:1px;background:#d0d0d0;"></div>
<div style="position:absolute;left:427px;top:222px;width:616px;height:1px;background:#d0d0d0;"></div>
<svg style="position:absolute;left:429px;top:204.5px" width="16" height="16" viewBox="0 0 16 16"><defs><linearGradient id="g123" x1="0" y1="0" x2="0" y2="1"><stop offset="0" stop-color="#c8e0f8"/><stop offset="1" stop-color="#8dbbea"/></linearGradient></defs><path d="M0.5 1.5 Q0.5 0.5 1.5 0.5 H11 L15.5 5 V14.3 L14.5 13.8 L13 15.5 L11.5 13.8 L10 14.5 L8.5 13.8 L7 14.5 L5.5 13.8 L4 14.5 L2.5 13.8 L1 14.5 L0.5 14 Z" fill="url(#g123)" stroke="#5b8fcf" stroke-width="1"/><path d="M11 0.5 V5 H15.5" fill="#fff" fill-opacity="0.6" stroke="#5b8fcf" stroke-width="0.8"/><text x="1.5" y="10.8" font-size="7.6" font-family="Liberation Sans" font-weight="bold" fill="#062a5c" textLength="10.6" lengthAdjust="spacingAndGlyphs">123</text></svg>
<div style="position:absolute;left:454px;top:206px;width:2px;height:12px;background:#2b3a2b;"></div>
<div style="position:absolute;left:456px;top:211px;width:5px;height:2px;background:#111;"></div>
<span class="t " id="t13" style="left:464.5px;top:212.5px;font-size:12px;color:#000;margin-top:-7.08px;transform:scaleX(0.9494);">短期RSI<span class="k"><span>の</span></span>期間</span>
<span class="t " id="t14" style="left:737.8px;top:213.8px;font-size:11.5px;color:#000;margin-top:-5.75px;transform:scaleX(1.0000);">5</span>
<div style="position:absolute;left:427px;top:222px;width:616px;height:1px;background:#d0d0d0;"></div>
<svg style="position:absolute;left:429px;top:224.5px" width="16" height="16" viewBox="0 0 16 16"><defs><linearGradient id="g123" x1="0" y1="0" x2="0" y2="1"><stop offset="0" stop-color="#c8e0f8"/><stop offset="1" stop-color="#8dbbea"/></linearGradient></defs><path d="M0.5 1.5 Q0.5 0.5 1.5 0.5 H11 L15.5 5 V14.3 L14.5 13.8 L13 15.5 L11.5 13.8 L10 14.5 L8.5 13.8 L7 14.5 L5.5 13.8 L4 14.5 L2.5 13.8 L1 14.5 L0.5 14 Z" fill="url(#g123)" stroke="#5b8fcf" stroke-width="1"/><path d="M11 0.5 V5 H15.5" fill="#fff" fill-opacity="0.6" stroke="#5b8fcf" stroke-width="0.8"/><text x="1.5" y="10.8" font-size="7.6" font-family="Liberation Sans" font-weight="bold" fill="#062a5c" textLength="10.6" lengthAdjust="spacingAndGlyphs">123</text></svg>
<div style="position:absolute;left:454px;top:226px;width:2px;height:12px;background:#2b3a2b;"></div>
<div style="position:absolute;left:456px;top:231px;width:5px;height:2px;background:#111;"></div>
<span class="t " id="t15" style="left:464.5px;top:232.5px;font-size:12px;color:#000;margin-top:-7.08px;transform:scaleX(0.9494);">長期RSI<span class="k"><span>の</span></span>期間</span>
<span class="t " id="t16" style="left:737.8px;top:233.8px;font-size:11.5px;color:#000;margin-top:-5.75px;transform:scaleX(1.0000);">14</span>
<div style="position:absolute;left:427px;top:242px;width:616px;height:20px;background:#e9e9e9;"></div>
<div style="position:absolute;left:427px;top:242px;width:616px;height:1px;background:#d0d0d0;"></div>
<div style="position:absolute;left:427px;top:262px;width:616px;height:1px;background:#d0d0d0;"></div>
<svg style="position:absolute;left:429px;top:244.5px" width="16" height="16" viewBox="0 0 16 16"><defs><linearGradient id="g123" x1="0" y1="0" x2="0" y2="1"><stop offset="0" stop-color="#c8e0f8"/><stop offset="1" stop-color="#8dbbea"/></linearGradient></defs><path d="M0.5 1.5 Q0.5 0.5 1.5 0.5 H11 L15.5 5 V14.3 L14.5 13.8 L13 15.5 L11.5 13.8 L10 14.5 L8.5 13.8 L7 14.5 L5.5 13.8 L4 14.5 L2.5 13.8 L1 14.5 L0.5 14 Z" fill="url(#g123)" stroke="#5b8fcf" stroke-width="1"/><path d="M11 0.5 V5 H15.5" fill="#fff" fill-opacity="0.6" stroke="#5b8fcf" stroke-width="0.8"/><text x="1.5" y="10.8" font-size="7.6" font-family="Liberation Sans" font-weight="bold" fill="#062a5c" textLength="10.6" lengthAdjust="spacingAndGlyphs">123</text></svg>
<div style="position:absolute;left:454px;top:246px;width:2px;height:12px;background:#2b3a2b;"></div>
<div style="position:absolute;left:456px;top:251px;width:5px;height:2px;background:#111;"></div>
<span class="t " id="t17" style="left:464.5px;top:252.5px;font-size:12px;color:#000;margin-top:-7.08px;transform:scaleX(1.0207);">上<span class="k"><span>レ</span></span><span class="k"><span>ベ</span></span><span class="k"><span>ル</span></span><span class="k"><span>ラ</span></span><span class="k"><span>イ</span></span><span class="k"><span>ン</span></span></span>
<span class="t " id="t18" style="left:737.8px;top:253.8px;font-size:11.5px;color:#000;margin-top:-5.75px;transform:scaleX(1.0000);">70</span>
<div style="position:absolute;left:427px;top:262px;width:616px;height:1px;background:#d0d0d0;"></div>
<svg style="position:absolute;left:429px;top:264.5px" width="16" height="16" viewBox="0 0 16 16"><defs><linearGradient id="g123" x1="0" y1="0" x2="0" y2="1"><stop offset="0" stop-color="#c8e0f8"/><stop offset="1" stop-color="#8dbbea"/></linearGradient></defs><path d="M0.5 1.5 Q0.5 0.5 1.5 0.5 H11 L15.5 5 V14.3 L14.5 13.8 L13 15.5 L11.5 13.8 L10 14.5 L8.5 13.8 L7 14.5 L5.5 13.8 L4 14.5 L2.5 13.8 L1 14.5 L0.5 14 Z" fill="url(#g123)" stroke="#5b8fcf" stroke-width="1"/><path d="M11 0.5 V5 H15.5" fill="#fff" fill-opacity="0.6" stroke="#5b8fcf" stroke-width="0.8"/><text x="1.5" y="10.8" font-size="7.6" font-family="Liberation Sans" font-weight="bold" fill="#062a5c" textLength="10.6" lengthAdjust="spacingAndGlyphs">123</text></svg>
<div style="position:absolute;left:454px;top:266px;width:2px;height:12px;background:#2b3a2b;"></div>
<div style="position:absolute;left:456px;top:271px;width:5px;height:2px;background:#111;"></div>
<span class="t " id="t19" style="left:464.5px;top:272.5px;font-size:12px;color:#000;margin-top:-7.08px;transform:scaleX(1.0207);">下<span class="k"><span>レ</span></span><span class="k"><span>ベ</span></span><span class="k"><span>ル</span></span><span class="k"><span>ラ</span></span><span class="k"><span>イ</span></span><span class="k"><span>ン</span></span></span>
<span class="t " id="t20" style="left:737.8px;top:273.8px;font-size:11.5px;color:#000;margin-top:-5.75px;transform:scaleX(1.0000);">30</span>
<div style="position:absolute;left:427px;top:282px;width:616px;height:20px;background:#e9e9e9;"></div>
<div style="position:absolute;left:427px;top:282px;width:616px;height:1px;background:#d0d0d0;"></div>
<div style="position:absolute;left:427px;top:302px;width:616px;height:1px;background:#d0d0d0;"></div>
<svg style="position:absolute;left:429px;top:284.5px" width="16" height="16" viewBox="0 0 16 16"><defs><linearGradient id="ghalf" x1="0" y1="0" x2="0" y2="1"><stop offset="0" stop-color="#b8e8f6"/><stop offset="1" stop-color="#7fcce6"/></linearGradient></defs><path d="M0.5 1.5 Q0.5 0.5 1.5 0.5 H11 L15.5 5 V14.3 L14.5 13.8 L13 15.5 L11.5 13.8 L10 14.5 L8.5 13.8 L7 14.5 L5.5 13.8 L4 14.5 L2.5 13.8 L1 14.5 L0.5 14 Z" fill="url(#ghalf)" stroke="#58a8cc" stroke-width="1"/><path d="M11 0.5 V5 H15.5" fill="#fff" fill-opacity="0.6" stroke="#58a8cc" stroke-width="0.8"/><path d="M2.6 4.2 L3.8 3.4 V9.5 M6.8 3 L4.6 10 M6.6 6 Q7.5 5 8.6 5.4 Q9.4 6.2 8.4 7.4 L6.6 9.6 H9.4" stroke="#0a4064" stroke-width="1.1" fill="none"/></svg>
<div style="position:absolute;left:454px;top:286px;width:2px;height:7px;background:#2b3a2b;"></div>
<div style="position:absolute;left:454px;top:291px;width:7px;height:2px;background:#111;"></div>
<span class="t " id="t21" style="left:464.5px;top:292.5px;font-size:12px;color:#000;margin-top:-6.00px;transform:scaleX(0.9833);">最低乖離数</span>
<span class="t " id="t22" style="left:737.8px;top:293.8px;font-size:11.5px;color:#000;margin-top:-5.75px;transform:scaleX(0.9111);">10.0</span>
<div style="position:absolute;left:427px;top:302px;width:616px;height:1px;background:#d0d0d0;"></div>
<svg style="position:absolute;left:429px;top:304.5px" width="16" height="16" viewBox="0 0 16 16"><defs><linearGradient id="gab" x1="0" y1="0" x2="0" y2="1"><stop offset="0" stop-color="#fbf0b0"/><stop offset="1" stop-color="#ecd978"/></linearGradient></defs><path d="M0.5 1.5 Q0.5 0.5 1.5 0.5 H11 L15.5 5 V14.3 L14.5 13.8 L13 15.5 L11.5 13.8 L10 14.5 L8.5 13.8 L7 14.5 L5.5 13.8 L4 14.5 L2.5 13.8 L1 14.5 L0.5 14 Z" fill="url(#gab)" stroke="#c2ae50" stroke-width="1"/><path d="M11 0.5 V5 H15.5" fill="#fff" fill-opacity="0.6" stroke="#c2ae50" stroke-width="0.8"/><text x="1.8" y="11" font-size="9.5" font-family="Liberation Sans" font-weight="bold" fill="#4a3e00" textLength="9.6" lengthAdjust="spacingAndGlyphs">ab</text></svg>
<svg style="position:absolute;left:0;top:0;overflow:visible" width="1" height="1"><path d="M449.8 307.9 H460.1 L454.95 316.3 Z" fill="#000"/><path d="M462.3 307.59999999999997 H471.6 L466.95 315.8 Z" fill="none" stroke="#9a9a9a" stroke-width="1"/><path d="M473.8 307.9 H484.1 L478.95 316.3 Z" fill="#000"/></svg>
<span class="t " id="t23" style="left:489px;top:312.5px;font-size:12px;color:#000;margin-top:-7.08px;transform:scaleX(1.0060);"><span class="k"><span>サ</span></span><span class="k"><span>イ</span></span><span class="k"><span>ン</span></span>関連<span class="k"><span>の</span></span>設定</span>
<svg style="position:absolute;left:0;top:0;overflow:visible" width="1" height="1"><path d="M578 307.9 H588.3 L583.15 316.3 Z" fill="#000"/><path d="M590.5 307.59999999999997 H599.8 L595.15 315.8 Z" fill="none" stroke="#9a9a9a" stroke-width="1"/><path d="M602 307.9 H612.3 L607.15 316.3 Z" fill="#000"/></svg>
<span class="t " id="t24" style="left:737.8px;top:313.8px;font-size:11.5px;color:#000;margin-top:-5.75px;transform:scaleX(1.0000);">-</span>
<div style="position:absolute;left:427px;top:322px;width:616px;height:20px;background:#e9e9e9;"></div>
<div style="position:absolute;left:427px;top:322px;width:616px;height:1px;background:#d0d0d0;"></div>
<div style="position:absolute;left:427px;top:342px;width:616px;height:1px;background:#d0d0d0;"></div>
<svg style="position:absolute;left:429px;top:324.5px" width="16" height="16" viewBox="0 0 16 16"><defs><linearGradient id="gbool" x1="0" y1="0" x2="0" y2="1"><stop offset="0" stop-color="#b8f0b8"/><stop offset="1" stop-color="#7ed87e"/></linearGradient></defs><path d="M0.5 1.5 Q0.5 0.5 1.5 0.5 H11 L15.5 5 V14.3 L14.5 13.8 L13 15.5 L11.5 13.8 L10 14.5 L8.5 13.8 L7 14.5 L5.5 13.8 L4 14.5 L2.5 13.8 L1 14.5 L0.5 14 Z" fill="url(#gbool)" stroke="#4eaa4e" stroke-width="1"/><path d="M11 0.5 V5 H15.5" fill="#fff" fill-opacity="0.6" stroke="#4eaa4e" stroke-width="0.8"/><path d="M2.6 11.5 L6.8 7.5 M8 10 Q9.5 11 12 10.6" stroke="#0e5e0e" stroke-width="1.5" fill="none"/></svg>
<div style="position:absolute;left:454px;top:326px;width:2px;height:12px;background:#2b3a2b;"></div>
<div style="position:absolute;left:456px;top:331px;width:5px;height:2px;background:#111;"></div>
<span class="t " id="t25" style="left:464.7px;top:332.5px;font-size:12px;color:#000;margin-top:-7.08px;transform:scaleX(0.9127);"><span class="k"><span>ア</span></span><span class="k"><span>ラ</span></span><span class="k"><span>ー</span></span><span class="k"><span>ト</span></span><span class="k"><span>を</span></span></span>
<span class="t " id="t26" style="left:509.9px;top:332.5px;font-size:12px;color:#000;margin-top:-7.08px;transform:scaleX(1.0185);">鳴<span class="k"><span>ら</span></span><span class="k"><span>す</span></span></span>
<span class="t " id="t27" style="left:540.9px;top:332.5px;font-size:12px;color:#000;margin-top:-6.00px;transform:scaleX(1.0005);">=true</span>
<span class="t " id="t28" style="left:572px;top:332.5px;font-size:12px;color:#000;margin-top:-6.00px;transform:scaleX(1.0000);">,</span>
<span class="t " id="t29" style="left:578.7px;top:332.5px;font-size:12px;color:#000;margin-top:-7.08px;transform:scaleX(0.9937);">鳴<span class="k"><span>ら</span></span><span class="k"><span>さ</span></span><span class="k"><span>な</span></span><span class="k"><span>い</span></span></span>
<span class="t " id="t30" style="left:627.2px;top:332.5px;font-size:12px;color:#000;margin-top:-6.00px;transform:scaleX(0.9796);">=false</span>
<span class="t " id="t31" style="left:737.8px;top:333.8px;font-size:11.5px;color:#000;margin-top:-5.75px;transform:scaleX(1.0339);">true</span>
<div style="position:absolute;left:427px;top:342px;width:616px;height:1px;background:#d0d0d0;"></div>
<svg style="position:absolute;left:429px;top:344.5px" width="16" height="16" viewBox="0 0 16 16"><defs><linearGradient id="gbool" x1="0" y1="0" x2="0" y2="1"><stop offset="0" stop-color="#b8f0b8"/><stop offset="1" stop-color="#7ed87e"/></linearGradient></defs><path d="M0.5 1.5 Q0.5 0.5 1.5 0.5 H11 L15.5 5 V14.3 L14.5 13.8 L13 15.5 L11.5 13.8 L10 14.5 L8.5 13.8 L7 14.5 L5.5 13.8 L4 14.5 L2.5 13.8 L1 14.5 L0.5 14 Z" fill="url(#gbool)" stroke="#4eaa4e" stroke-width="1"/><path d="M11 0.5 V5 H15.5" fill="#fff" fill-opacity="0.6" stroke="#4eaa4e" stroke-width="0.8"/><path d="M2.6 11.5 L6.8 7.5 M8 10 Q9.5 11 12 10.6" stroke="#0e5e0e" stroke-width="1.5" fill="none"/></svg>
<div style="position:absolute;left:454px;top:346px;width:2px;height:12px;background:#2b3a2b;"></div>
<div style="position:absolute;left:456px;top:351px;width:5px;height:2px;background:#111;"></div>
<span class="t " id="t32" style="left:464.7px;top:352.5px;font-size:12px;color:#000;margin-top:-7.08px;transform:scaleX(0.9866);"><span class="k"><span>サ</span></span><span class="k"><span>イ</span></span><span class="k"><span>ン</span></span><span class="k"><span>を</span></span>表示</span>
<span class="t " id="t33" style="left:528.8px;top:352.5px;font-size:12px;color:#000;margin-top:-7.08px;transform:scaleX(1.0254);"><span class="k"><span>す</span></span><span class="k"><span>る</span></span></span>
<span class="t " id="t34" style="left:547.5px;top:352.5px;font-size:12px;color:#000;margin-top:-6.00px;transform:scaleX(1.0293);">=true</span>
<span class="t " id="t35" style="left:579.5px;top:352.5px;font-size:12px;color:#000;margin-top:-6.00px;transform:scaleX(1.0000);">,</span>
<span class="t " id="t36" style="left:585.4px;top:352.5px;font-size:12px;color:#000;margin-top:-7.08px;transform:scaleX(1.0629);"><span class="k"><span>し</span></span><span class="k"><span>な</span></span><span class="k"><span>い</span></span></span>
<span class="t " id="t37" style="left:615px;top:352.5px;font-size:12px;color:#000;margin-top:-6.00px;transform:scaleX(0.9209);">=false</span>
<span class="t " id="t38" style="left:737.8px;top:353.8px;font-size:11.5px;color:#000;margin-top:-5.75px;transform:scaleX(1.0339);">true</span>
<div style="position:absolute;left:427px;top:362px;width:616px;height:20px;background:#e9e9e9;"></div>
<div style="position:absolute;left:427px;top:362px;width:616px;height:1px;background:#d0d0d0;"></div>
<div style="position:absolute;left:427px;top:382px;width:616px;height:1px;background:#d0d0d0;"></div>
<svg style="position:absolute;left:429px;top:364.5px" width="16" height="16" viewBox="0 0 16 16"><defs><linearGradient id="g123" x1="0" y1="0" x2="0" y2="1"><stop offset="0" stop-color="#c8e0f8"/><stop offset="1" stop-color="#8dbbea"/></linearGradient></defs><path d="M0.5 1.5 Q0.5 0.5 1.5 0.5 H11 L15.5 5 V14.3 L14.5 13.8 L13 15.5 L11.5 13.8 L10 14.5 L8.5 13.8 L7 14.5 L5.5 13.8 L4 14.5 L2.5 13.8 L1 14.5 L0.5 14 Z" fill="url(#g123)" stroke="#5b8fcf" stroke-width="1"/><path d="M11 0.5 V5 H15.5" fill="#fff" fill-opacity="0.6" stroke="#5b8fcf" stroke-width="0.8"/><text x="1.5" y="10.8" font-size="7.6" font-family="Liberation Sans" font-weight="bold" fill="#062a5c" textLength="10.6" lengthAdjust="spacingAndGlyphs">123</text></svg>
<div style="position:absolute;left:454px;top:366px;width:2px;height:12px;background:#2b3a2b;"></div>
<div style="position:absolute;left:456px;top:371px;width:5px;height:2px;background:#111;"></div>
<span class="t " id="t39" style="left:464.5px;top:372.5px;font-size:12px;color:#000;margin-top:-7.08px;transform:scaleX(1.0050);"><span class="k"><span>サ</span></span><span class="k"><span>イ</span></span><span class="k"><span>ン</span></span>表示期間</span>
<span class="t " id="t40" style="left:737.8px;top:373.8px;font-size:11.5px;color:#000;margin-top:-5.75px;transform:scaleX(0.9104);">1440</span>
<div style="position:absolute;left:427px;top:382px;width:616px;height:1px;background:#d0d0d0;"></div>
<svg style="position:absolute;left:429px;top:384.5px" width="16" height="16" viewBox="0 0 16 16"><defs><linearGradient id="g123" x1="0" y1="0" x2="0" y2="1"><stop offset="0" stop-color="#c8e0f8"/><stop offset="1" stop-color="#8dbbea"/></linearGradient></defs><path d="M0.5 1.5 Q0.5 0.5 1.5 0.5 H11 L15.5 5 V14.3 L14.5 13.8 L13 15.5 L11.5 13.8 L10 14.5 L8.5 13.8 L7 14.5 L5.5 13.8 L4 14.5 L2.5 13.8 L1 14.5 L0.5 14 Z" fill="url(#g123)" stroke="#5b8fcf" stroke-width="1"/><path d="M11 0.5 V5 H15.5" fill="#fff" fill-opacity="0.6" stroke="#5b8fcf" stroke-width="0.8"/><text x="1.5" y="10.8" font-size="7.6" font-family="Liberation Sans" font-weight="bold" fill="#062a5c" textLength="10.6" lengthAdjust="spacingAndGlyphs">123</text></svg>
<div style="position:absolute;left:454px;top:386px;width:2px;height:12px;background:#2b3a2b;"></div>
<div style="position:absolute;left:456px;top:391px;width:5px;height:2px;background:#111;"></div>
<span class="t " id="t41" style="left:464.5px;top:392.5px;font-size:12px;color:#000;margin-top:-7.08px;transform:scaleX(1.0050);"><span class="k"><span>サ</span></span><span class="k"><span>イ</span></span><span class="k"><span>ン</span></span>表示位置</span>
<span class="t " id="t42" style="left:737.8px;top:393.8px;font-size:11.5px;color:#000;margin-top:-5.75px;transform:scaleX(1.0000);">1</span>
<div style="position:absolute;left:427px;top:402px;width:616px;height:20px;background:#e9e9e9;"></div>
<div style="position:absolute;left:427px;top:402px;width:616px;height:1px;background:#d0d0d0;"></div>
<div style="position:absolute;left:427px;top:422px;width:616px;height:1px;background:#d0d0d0;"></div>
<svg style="position:absolute;left:429px;top:404.5px" width="16" height="16" viewBox="0 0 16 16"><defs><linearGradient id="g123" x1="0" y1="0" x2="0" y2="1"><stop offset="0" stop-color="#c8e0f8"/><stop offset="1" stop-color="#8dbbea"/></linearGradient></defs><path d="M0.5 1.5 Q0.5 0.5 1.5 0.5 H11 L15.5 5 V14.3 L14.5 13.8 L13 15.5 L11.5 13.8 L10 14.5 L8.5 13.8 L7 14.5 L5.5 13.8 L4 14.5 L2.5 13.8 L1 14.5 L0.5 14 Z" fill="url(#g123)" stroke="#5b8fcf" stroke-width="1"/><path d="M11 0.5 V5 H15.5" fill="#fff" fill-opacity="0.6" stroke="#5b8fcf" stroke-width="0.8"/><text x="1.5" y="10.8" font-size="7.6" font-family="Liberation Sans" font-weight="bold" fill="#062a5c" textLength="10.6" lengthAdjust="spacingAndGlyphs">123</text></svg>
<div style="position:absolute;left:454px;top:406px;width:2px;height:12px;background:#2b3a2b;"></div>
<div style="position:absolute;left:456px;top:411px;width:5px;height:2px;background:#111;"></div>
<span class="t " id="t43" style="left:464.5px;top:412.5px;font-size:12px;color:#000;margin-top:-7.08px;transform:scaleX(1.0420);">矢印<span class="k"><span>の</span></span><span class="k"><span>サ</span></span><span class="k"><span>イ</span></span><span class="k"><span>ズ</span></span></span>
<span class="t " id="t44" style="left:737.8px;top:413.8px;font-size:11.5px;color:#000;margin-top:-5.75px;transform:scaleX(1.0000);">1</span>
<div style="position:absolute;left:427px;top:422px;width:616px;height:1px;background:#d0d0d0;"></div>
<svg style="position:absolute;left:429px;top:424.5px" width="16" height="16" viewBox="0 0 16 16"><defs><linearGradient id="g123" x1="0" y1="0" x2="0" y2="1"><stop offset="0" stop-color="#c8e0f8"/><stop offset="1" stop-color="#8dbbea"/></linearGradient></defs><path d="M0.5 1.5 Q0.5 0.5 1.5 0.5 H11 L15.5 5 V14.3 L14.5 13.8 L13 15.5 L11.5 13.8 L10 14.5 L8.5 13.8 L7 14.5 L5.5 13.8 L4 14.5 L2.5 13.8 L1 14.5 L0.5 14 Z" fill="url(#g123)" stroke="#5b8fcf" stroke-width="1"/><path d="M11 0.5 V5 H15.5" fill="#fff" fill-opacity="0.6" stroke="#5b8fcf" stroke-width="0.8"/><text x="1.5" y="10.8" font-size="7.6" font-family="Liberation Sans" font-weight="bold" fill="#062a5c" textLength="10.6" lengthAdjust="spacingAndGlyphs">123</text></svg>
<div style="position:absolute;left:454px;top:426px;width:2px;height:12px;background:#2b3a2b;"></div>
<div style="position:absolute;left:456px;top:431px;width:5px;height:2px;background:#111;"></div>
<span class="t " id="t45" style="left:464.5px;top:432.5px;font-size:12px;color:#000;margin-top:-7.08px;transform:scaleX(0.9790);">上矢印<span class="k"><span>の</span></span><span class="k"><span>コ</span></span><span class="k"><span>ー</span></span><span class="k"><span>ド</span></span></span>
<span class="t " id="t46" style="left:737.8px;top:433.8px;font-size:11.5px;color:#000;margin-top:-5.75px;transform:scaleX(0.9016);">233</span>
<div style="position:absolute;left:427px;top:442px;width:616px;height:20px;background:#e9e9e9;"></div>
<div style="position:absolute;left:427px;top:442px;width:616px;height:1px;background:#d0d0d0;"></div>
<div style="position:absolute;left:427px;top:462px;width:616px;height:1px;background:#d0d0d0;"></div>
<svg style="position:absolute;left:429px;top:444.5px" width="16" height="16" viewBox="0 0 16 16"><defs><linearGradient id="gcol" x1="0" y1="0" x2="0" y2="1"><stop offset="0" stop-color="#ffffff"/><stop offset="1" stop-color="#f4f4f4"/></linearGradient></defs><path d="M0.5 1.5 Q0.5 0.5 1.5 0.5 H11 L15.5 5 V14.3 L14.5 13.8 L13 15.5 L11.5 13.8 L10 14.5 L8.5 13.8 L7 14.5 L5.5 13.8 L4 14.5 L2.5 13.8 L1 14.5 L0.5 14 Z" fill="url(#gcol)" stroke="#6e6e6e" stroke-width="1"/><path d="M11 0.5 V5 H15.5" fill="#fff" fill-opacity="0.6" stroke="#6e6e6e" stroke-width="0.8"/><rect x="2.5" y="6" width="10" height="4.5" fill="#f29600"/><rect x="4.5" y="7" width="6" height="2.5" fill="#ffe43c"/></svg>
<div style="position:absolute;left:454px;top:446px;width:2px;height:12px;background:#2b3a2b;"></div>
<div style="position:absolute;left:456px;top:451px;width:5px;height:2px;background:#111;"></div>
<span class="t " id="t47" style="left:464.5px;top:452.5px;font-size:12px;color:#000;margin-top:-7.08px;transform:scaleX(0.9952);">上矢印<span class="k"><span>の</span></span>色</span>
<div style="position:absolute;left:738px;top:446px;width:12px;height:12px;background:#ff00ff;border:1px solid #8a8a8a;box-sizing:border-box;"></div>
<span class="t " id="t48" style="left:753.6px;top:452.5px;font-size:12px;color:#000;margin-top:-6.00px;transform:scaleX(1.0064);">Magenta</span>
<div style="position:absolute;left:427px;top:462px;width:616px;height:1px;background:#d0d0d0;"></div>
<svg style="position:absolute;left:429px;top:464.5px" width="16" height="16" viewBox="0 0 16 16"><defs><linearGradient id="g123" x1="0" y1="0" x2="0" y2="1"><stop offset="0" stop-color="#c8e0f8"/><stop offset="1" stop-color="#8dbbea"/></linearGradient></defs><path d="M0.5 1.5 Q0.5 0.5 1.5 0.5 H11 L15.5 5 V14.3 L14.5 13.8 L13 15.5 L11.5 13.8 L10 14.5 L8.5 13.8 L7 14.5 L5.5 13.8 L4 14.5 L2.5 13.8 L1 14.5 L0.5 14 Z" fill="url(#g123)" stroke="#5b8fcf" stroke-width="1"/><path d="M11 0.5 V5 H15.5" fill="#fff" fill-opacity="0.6" stroke="#5b8fcf" stroke-width="0.8"/><text x="1.5" y="10.8" font-size="7.6" font-family="Liberation Sans" font-weight="bold" fill="#062a5c" textLength="10.6" lengthAdjust="spacingAndGlyphs">123</text></svg>
<div style="position:absolute;left:454px;top:466px;width:2px;height:12px;background:#2b3a2b;"></div>
<div style="position:absolute;left:456px;top:471px;width:5px;height:2px;background:#111;"></div>
<span class="t " id="t49" style="left:464.5px;top:472.5px;font-size:12px;color:#000;margin-top:-7.08px;transform:scaleX(0.9790);">下矢印<span class="k"><span>の</span></span><span class="k"><span>コ</span></span><span class="k"><span>ー</span></span><span class="k"><span>ド</span></span></span>
<span class="t " id="t50" style="left:737.8px;top:473.8px;font-size:11.5px;color:#000;margin-top:-5.75px;transform:scaleX(0.9016);">234</span>
<div style="position:absolute;left:427px;top:482px;width:616px;height:20px;background:#e9e9e9;"></div>
<div style="position:absolute;left:427px;top:482px;width:616px;height:1px;background:#d0d0d0;"></div>
<div style="position:absolute;left:427px;top:502px;width:616px;height:1px;background:#d0d0d0;"></div>
<svg style="position:absolute;left:429px;top:484.5px" width="16" height="16" viewBox="0 0 16 16"><defs><linearGradient id="gcol" x1="0" y1="0" x2="0" y2="1"><stop offset="0" stop-color="#ffffff"/><stop offset="1" stop-color="#f4f4f4"/></linearGradient></defs><path d="M0.5 1.5 Q0.5 0.5 1.5 0.5 H11 L15.5 5 V14.3 L14.5 13.8 L13 15.5 L11.5 13.8 L10 14.5 L8.5 13.8 L7 14.5 L5.5 13.8 L4 14.5 L2.5 13.8 L1 14.5 L0.5 14 Z" fill="url(#gcol)" stroke="#6e6e6e" stroke-width="1"/><path d="M11 0.5 V5 H15.5" fill="#fff" fill-opacity="0.6" stroke="#6e6e6e" stroke-width="0.8"/><rect x="2.5" y="6" width="10" height="4.5" fill="#f29600"/><rect x="4.5" y="7" width="6" height="2.5" fill="#ffe43c"/></svg>
<div style="position:absolute;left:454px;top:486px;width:2px;height:7px;background:#2b3a2b;"></div>
<div style="position:absolute;left:454px;top:491px;width:7px;height:2px;background:#111;"></div>
<span class="t " id="t51" style="left:464.5px;top:492.5px;font-size:12px;color:#000;margin-top:-7.08px;transform:scaleX(0.9952);">下矢印<span class="k"><span>の</span></span>色</span>
<div style="position:absolute;left:738px;top:486px;width:12px;height:12px;background:#00ffff;border:1px solid #8a8a8a;box-sizing:border-box;"></div>
<span class="t " id="t52" style="left:753.6px;top:492.5px;font-size:12px;color:#000;margin-top:-6.00px;transform:scaleX(0.9989);">Aqua</span>
<div style="position:absolute;left:734px;top:182px;width:1px;height:320px;background:#d0d0d0;"></div>
<div style="position:absolute;left:1053px;top:460px;width:121px;height:24px;background:#e1e1e1;border:1px solid #adadad;box-sizing:border-box;"></div><span class="t " id="t53" style="left:1082.5px;top:472.0px;font-size:12px;color:#000;margin-top:-7.08px;transform:scaleX(1.0377);">読<span class="k"><span>み</span></span>込<span class="k"><span>み</span></span> (L)</span>
<div style="position:absolute;left:1053px;top:497px;width:121px;height:24px;background:#e1e1e1;border:1px solid #adadad;box-sizing:border-box;"></div><span class="t " id="t54" style="left:1093.5px;top:509.0px;font-size:12px;color:#000;margin-top:-6.00px;transform:scaleX(0.9229);">保存 (S)</span>
<div style="position:absolute;left:906px;top:534px;width:86px;height:24px;background:#e1e1e1;border:2px solid #0078d7;box-sizing:border-box;"></div><span class="t " id="t55" style="left:941px;top:546.0px;font-size:12px;color:#000;margin-top:-6.00px;transform:scaleX(0.9225);">OK</span>
<div style="position:absolute;left:1001px;top:534px;width:86px;height:24px;background:#e1e1e1;border:1px solid #adadad;box-sizing:border-box;"></div><span class="t " id="t56" style="left:1021.5px;top:546.0px;font-size:12px;color:#000;margin-top:-7.08px;transform:scaleX(1.0141);"><span class="k"><span>キ</span></span><span class="k"><span>ャ</span></span><span class="k"><span>ン</span></span><span class="k"><span>セ</span></span><span class="k"><span>ル</span></span></span>
<div style="position:absolute;left:1095px;top:534px;width:86px;height:24px;background:#e1e1e1;border:1px solid #adadad;box-sizing:border-box;"></div><span class="t " id="t57" style="left:1120.5px;top:546.0px;font-size:12px;color:#000;margin-top:-7.08px;transform:scaleX(0.9718);"><span class="k"><span>リ</span></span><span class="k"><span>セ</span></span><span class="k"><span>ッ</span></span><span class="k"><span>ト</span></span></span>
<div style="position:absolute;left:1185px;top:557px;width:2px;height:2px;background:#bcbcbc;"></div>
<div style="position:absolute;left:1182px;top:560px;width:2px;height:2px;background:#bcbcbc;"></div>
<div style="position:absolute;left:1185px;top:560px;width:2px;height:2px;background:#bcbcbc;"></div>
<div style="position:absolute;left:1179px;top:563px;width:2px;height:2px;background:#bcbcbc;"></div>
<div style="position:absolute;left:1182px;top:563px;width:2px;height:2px;background:#bcbcbc;"></div>
<div style="position:absolute;left:1185px;top:563px;width:2px;height:2px;background:#bcbcbc;"></div>
</body></html>
